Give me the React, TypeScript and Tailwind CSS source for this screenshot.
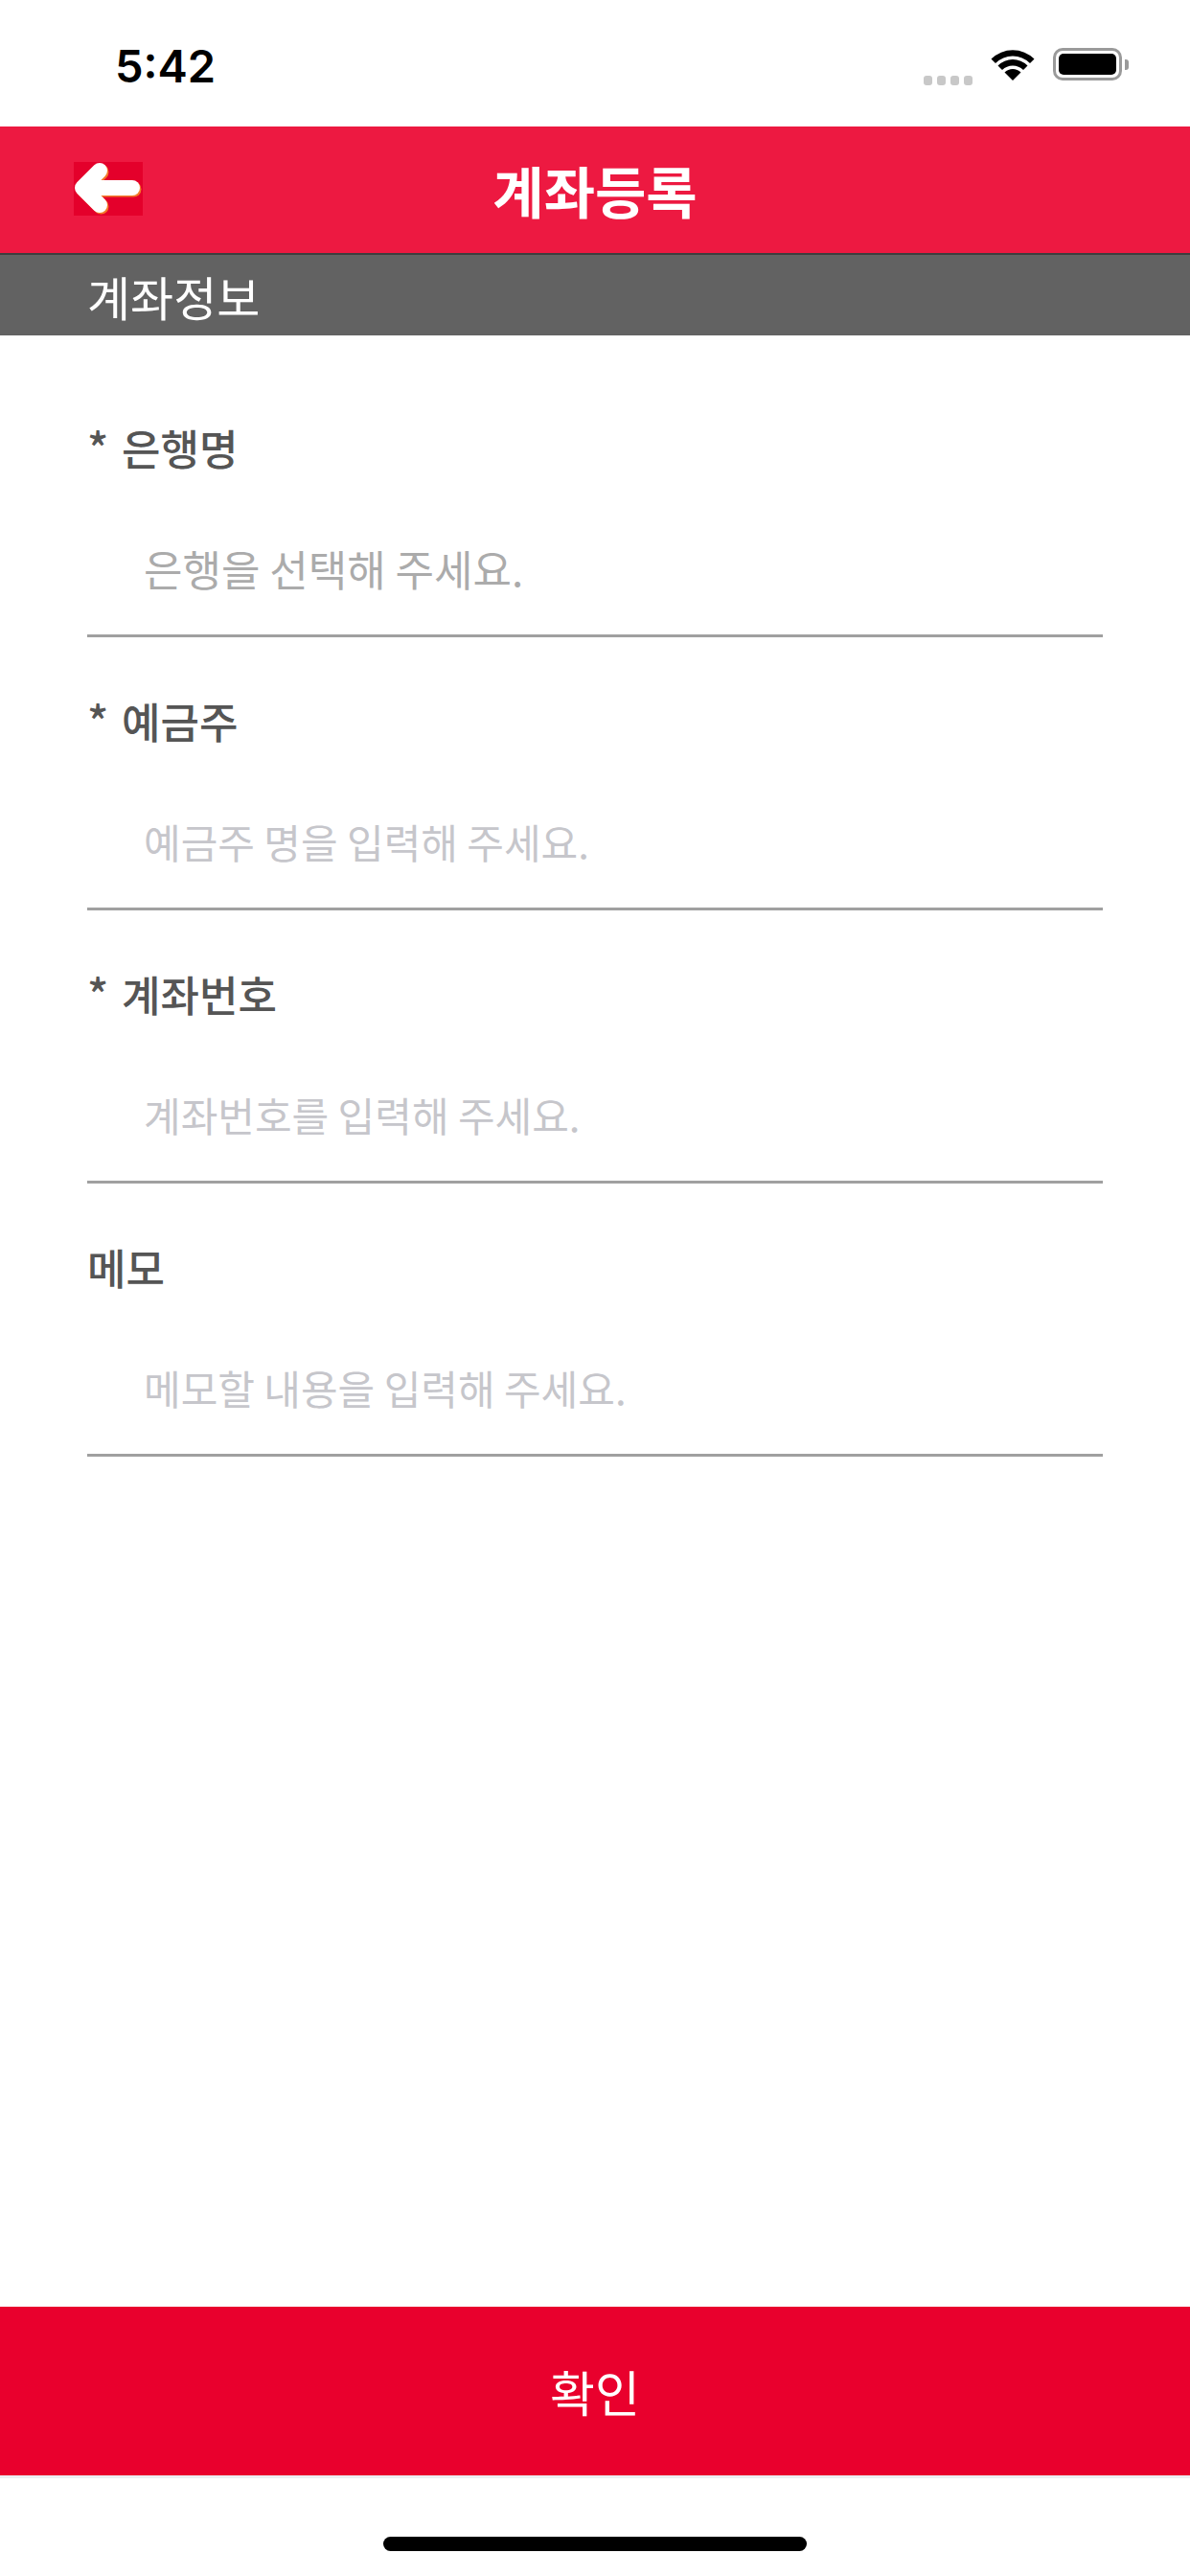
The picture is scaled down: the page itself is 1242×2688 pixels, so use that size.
import React from "react";

function StatusBar() {
  return (
    <div className="h-[132px] flex items-center justify-between bg-white">
      <div className="pl-[120px] pt-[4px] font-['Inter',sans-serif] font-semibold text-[47px] leading-none text-black">
        5:42
      </div>
      <div className="flex items-center pr-[64px] pt-[2px]">
        <div className="flex items-end gap-[5px] h-[34px] mt-[10px]">
          <span className="w-[9px] h-[10px] rounded-[3px] bg-[#C8C8C8]" />
          <span className="w-[9px] h-[10px] rounded-[3px] bg-[#C8C8C8]" />
          <span className="w-[9px] h-[10px] rounded-[3px] bg-[#C8C8C8]" />
          <span className="w-[9px] h-[10px] rounded-[3px] bg-[#C8C8C8]" />
        </div>
        <svg className="ml-[17px]" width="50" height="35" viewBox="0 0 50 35">
          <path d="M25 34 L16.5 25.5 A12 12 0 0 1 33.5 25.5 Z" fill="#000" />
          <path d="M9.5 18.5 A22 22 0 0 1 40.5 18.5 L36 23 A15.6 15.6 0 0 0 14 23 Z" fill="#000" />
          <path d="M2.5 11.5 A32 32 0 0 1 47.5 11.5 L43 16 A25.6 25.6 0 0 0 7 16 Z" fill="#000" />
        </svg>
        <div className="ml-[17px] flex items-center">
          <div className="w-[72px] h-[34px] rounded-[10px] border-[3px] border-[#9A9A9A] p-[3px]">
            <div className="w-full h-full rounded-[5px] bg-black" />
          </div>
          <div className="ml-[3px] w-[4px] h-[11px] rounded-r-[3px] bg-[#9A9A9A]" />
        </div>
      </div>
    </div>
  );
}

function BackArrow() {
  return (
    <div className="w-[72px] h-[56px] bg-[#E4002B] flex items-center justify-center">
      <svg width="72" height="56" viewBox="0 0 72 56">
        <g stroke="#F47A2A" strokeWidth="16" strokeLinecap="round" strokeLinejoin="round" fill="none" transform="translate(1.5 1.5)">
          <polyline points="27,9 9,27 27,45" />
          <line x1="10" y1="27" x2="61" y2="27" />
        </g>
        <g stroke="#FFFFFF" strokeWidth="16" strokeLinecap="round" strokeLinejoin="round" fill="none">
          <polyline points="27,9 9,27 27,45" />
          <line x1="10" y1="27" x2="61" y2="27" />
        </g>
      </svg>
    </div>
  );
}

function Header() {
  return (
    <div className="relative h-[132px] bg-[#ED1941] flex items-center justify-center">
      <div className="absolute left-[77px] top-[37px]">
        <BackArrow />
      </div>
      <div className="text-white font-bold text-[58px] leading-none">계좌등록</div>
    </div>
  );
}

type FieldProps = {
  label: string;
  required?: boolean;
  placeholder: string;
  placeholderClass: string;
};

function Field({ label, required, placeholder, placeholderClass }: FieldProps) {
  return (
    <div className="border-b-[3px] border-[#A0A0A0]">
      <div className="mt-[59px] h-[56px] flex items-center text-[44px] leading-none text-[#555555] font-medium">
        {required ? <span className="w-[36px] self-start pt-[4px] text-[46px]">*</span> : null}
        <span>{label}</span>
      </div>
      <div className={"mt-[29px] h-[138px] flex items-center pl-[59px] leading-none " + placeholderClass}>
        {placeholder}
      </div>
    </div>
  );
}

export default function App() {
  return (
    <div className="w-[1242px] min-h-[2688px] flex flex-col bg-white font-['Noto_Sans_CJK_KR','Noto_Sans',sans-serif]">
      <StatusBar />
      <Header />
      <div className="h-[86px] bg-[#626262] border-t-2 border-[#3E3E3E] flex items-center pl-[91px]">
        <span className="text-white text-[49px] leading-none">계좌정보</span>
      </div>
      <div className="pt-[30px] px-[91px] flex flex-col">
        <Field label="은행명" required placeholder="은행을 선택해 주세요." placeholderClass="text-[44px] text-[#ABABAB]" />
        <Field label="예금주" required placeholder="예금주 명을 입력해 주세요." placeholderClass="text-[42px] text-[#C6C6CB]" />
        <Field label="계좌번호" required placeholder="계좌번호를 입력해 주세요." placeholderClass="text-[42px] text-[#C6C6CB]" />
        <Field label="메모" placeholder="메모할 내용을 입력해 주세요." placeholderClass="text-[42px] text-[#C6C6CB]" />
      </div>
      <div className="flex-1" />
      <div className="h-[176px] bg-[#E9002D] flex items-center justify-center">
        <span className="text-white text-[51px] leading-none">확인</span>
      </div>
      <div className="h-[3px] bg-[#EEEEF2]" />
      <div className="h-[102px] flex justify-center pt-[61px]">
        <div className="w-[442px] h-[15px] rounded-full bg-black" />
      </div>
    </div>
  );
}
